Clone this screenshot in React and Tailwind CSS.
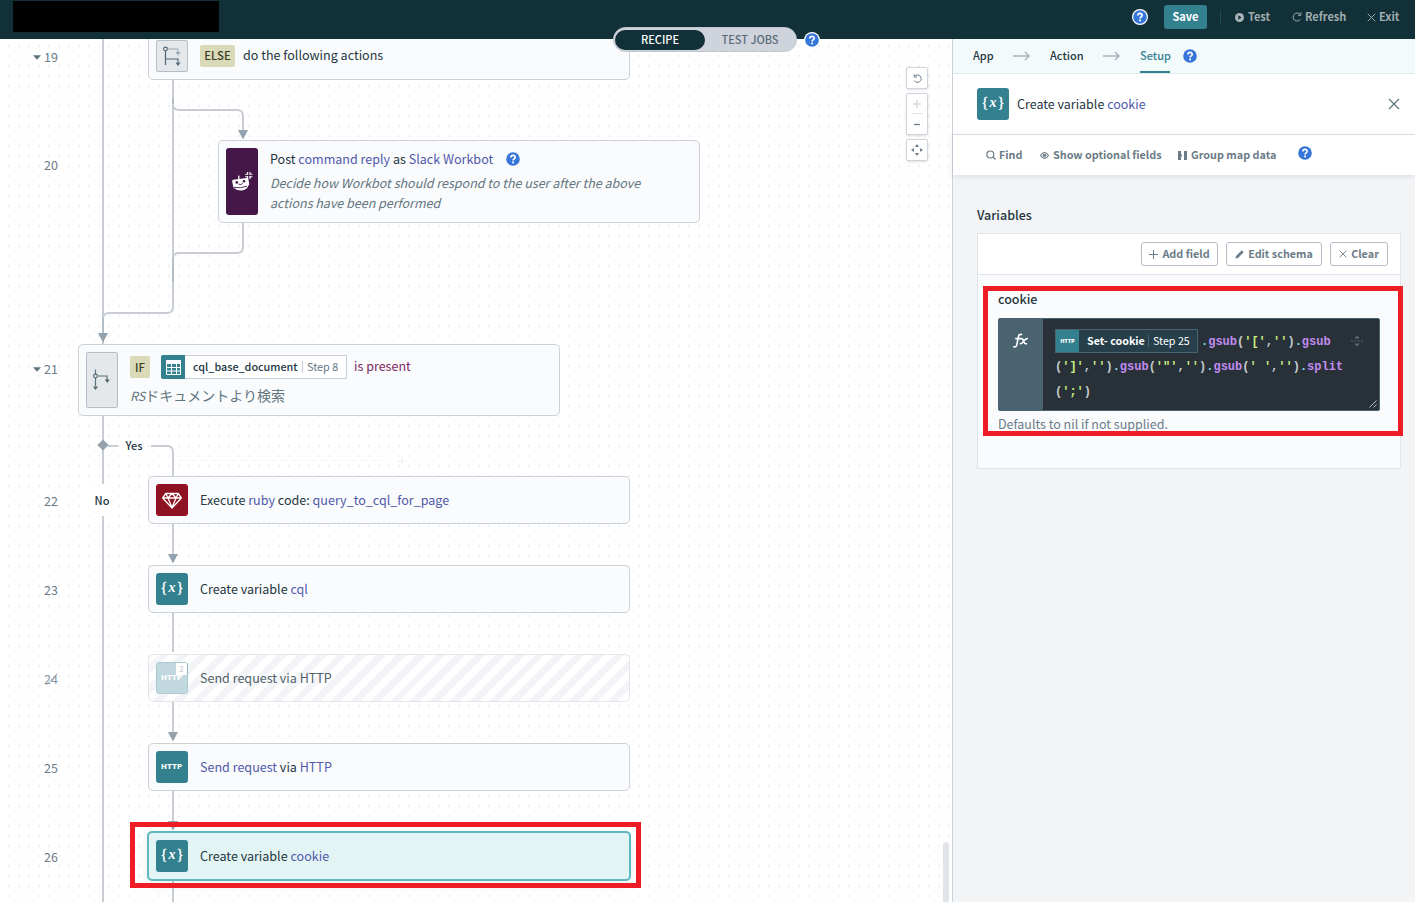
import React from "react";

const SANS = "font-['Noto_Sans_CJK_JP',sans-serif]";

function Help({ ring = false }) {
  return (
    <svg className="block h-4 w-4 shrink-0" viewBox="0 0 16 16">
      {ring ? <circle cx="8" cy="8" r="8" fill="#fff" /> : null}
      <circle cx="8" cy="8" r="6.8" fill="#3676d8" />
      <path d="M5.9 6.5c0-2.9 4.3-2.8 4.3-.2 0 1.6-2.1 1.6-2.1 3.1" fill="none" stroke="#fff" strokeWidth="1.7" />
      <rect x="7.2" y="10.5" width="1.8" height="1.8" fill="#fff" />
    </svg>
  );
}

function Cross({ className = "h-[9px] w-[9px]", sw = 1.1 }) {
  return (
    <svg className={className + " block shrink-0"} viewBox="0 0 10 10" fill="none" stroke="currentColor" strokeWidth={sw}>
      <path d="M.8.8l8.4 8.4M9.2.8L.8 9.2" />
    </svg>
  );
}

function VarIcon() {
  return (
    <div className="flex h-8 w-8 shrink-0 items-center justify-center gap-px rounded-[3px] bg-[#33808f] pb-[3px] font-['Liberation_Serif',serif] leading-none text-white">
      <span className="text-[15px] [-webkit-text-stroke:0.3px_#fff]">{"{"}</span>
      <span className="text-[14px] font-bold italic">x</span>
      <span className="text-[15px] [-webkit-text-stroke:0.3px_#fff]">{"}"}</span>
    </div>
  );
}

function HttpIcon({ faded = false }) {
  return (
    <div className={"relative flex h-8 w-8 shrink-0 items-center justify-center rounded-[3px] text-white " + (faded ? "border border-[#a9cbd1] bg-[#c1d9de]" : "bg-[#33808f]")}>
      <span className="scale-x-120 font-['Inter',sans-serif] text-[6px] font-black leading-none tracking-[0.2px]">HTTP</span>
      {faded ? (
        <span className="absolute -right-px top-0 flex h-3 w-3 items-center justify-center border-r border-[#8ebac2] bg-white text-[8px] leading-none text-[#c3c8d0]">2</span>
      ) : null}
    </div>
  );
}

function RubyIcon() {
  return (
    <div className="flex h-8 w-8 shrink-0 items-center justify-center rounded-[3px] bg-[#8e1220]">
      <svg className="h-8 w-8" viewBox="0 0 32 32" fill="none" stroke="#fff" strokeWidth="1.3" strokeLinejoin="round">
        <path d="M9.8 9.5h12.4l3.2 4.5-9.4 10L6.600 14zM6.600 14h18.800M12 14l4 9.500 4-9.500M9.800 9.500L12 14l4-4.500 4 4.500 2.200-4.500" />
      </svg>
    </div>
  );
}

function BotIcon() {
  return (
    <div className="flex h-[67px] w-8 shrink-0 items-center justify-center rounded-[3px] bg-[#451749]">
      <svg className="h-8 w-8" viewBox="0 0 32 32">
        <path d="M6.200 15.400q-.2-1.300 1-1.600l13.600-1.900q1.300-.2 1.600 1l.8 5.200q.1 1.200-1 1.600-1.300 4.300-6.600 4.800-4.500.2-6.800-2.100-1.200-.1-1.500-1.300z" fill="#fff" />
        <path d="M13 13l-.4-3.300" stroke="#fff" strokeWidth="1.300" />
        <circle cx="10.800" cy="16.400" r="1.300" fill="#451749" />
        <circle cx="18" cy="15.300" r="1.300" fill="#451749" />
        <path d="M12.500 18q2.500 1.400 4.200-.6" fill="none" stroke="#451749" strokeWidth=".9" />
        <path d="M8 21.300q6.500 1.600 13-1.200" fill="none" stroke="#451749" strokeWidth=".9" />
        <path d="M21.600 6v2.800M21.600 10v3M24 6v2.800M24 10v3M19.200 8.200H22M23.200 8.200H26.400M19.200 10.700H22M23.200 10.700H26.400" stroke="#fff" strokeWidth="1.100" />
      </svg>
    </div>
  );
}

function BranchIcon({ els = false }) {
  return (
    <div className={(els ? "h-8" : "h-14") + " flex w-8 shrink-0 items-center justify-center rounded-[2px] border border-[#b4bec8] bg-[#e4e8eb]"}>
      {els ? (
        <svg className="h-8 w-8 shrink-0" viewBox="0 0 32 32" fill="none">
          <path d="M12 9h10v3" stroke="#9aa8b3" strokeWidth="1" />
          <path d="M19.500 12h5L22 15.500z" fill="#9aa8b3" />
          <path d="M9.500 11v14M9.500 19H22v3" stroke="#4f6573" strokeWidth="1.200" />
          <path d="M19.500 22.500h5L22 26z" fill="#4f6573" />
          <circle cx="9.500" cy="9" r="1.900" stroke="#4f6573" strokeWidth="1.100" />
        </svg>
      ) : (
        <svg className="h-8 w-8 shrink-0" viewBox="0 0 32 32" fill="none">
          <path d="M9.500 5.500v5M9.500 14v8M11.500 12H21v4" stroke="#5c707a" strokeWidth="1.200" />
          <path d="M7 22.500h5L9.500 26zM18.800 15.500h5L21.300 19z" fill="#4f6560" />
          <circle cx="9.500" cy="12" r="1.900" stroke="#4f6573" strokeWidth="1.100" />
        </svg>
      )}
    </div>
  );
}

const Ln = ({ children }) => <span className="text-[#5059ab]">{children}</span>;

function Card({ place, children, disabled = false, selected = false }) {
  const skin = selected
    ? "border-2 border-[#5cb7bf] bg-[#e3f4f5] px-[7px] shadow-[0_4px_12px_rgba(60,80,100,0.1)]"
    : disabled
      ? "border border-[#e3e6ea] bg-[repeating-linear-gradient(135deg,#fff_0px,#fff_7px,#f3f4f7_7px,#f3f4f7_14px)] px-[7px]"
      : "border border-[#cbd1d8] bg-[#fafbfd] px-[7px]";
  return (
    <div className={"absolute flex items-center gap-3 rounded-[5px] text-[12.55px] leading-5 text-[#24363f] whitespace-nowrap " + skin + " " + place}>
      {children}
    </div>
  );
}

function StepNo({ place, n, caret = false, slash = false }) {
  return (
    <div className={"absolute left-0 flex h-5 w-[58px] items-center justify-end gap-[3px] text-[12.5px] leading-5 text-[#6b7c88] " + place + (slash ? " opacity-80" : "")}>
      {caret ? (
        <svg className="h-[5px] w-2" viewBox="0 0 8 5"><path d="M0 .3h8L4 4.700z" fill="#5e7481" /></svg>
      ) : null}
      <span>{n}</span>
      {slash ? (
        <svg className="absolute right-0 top-[4px] h-3 w-[13px]" viewBox="0 0 13 12"><path d="M1.500 12L12.500 .5" stroke="#7b8c98" /></svg>
      ) : null}
    </div>
  );
}

function Wires() {
  return (
    <svg className="absolute inset-0 h-[863px] w-[952px]" viewBox="0 39 952 863" fill="none">
      <g stroke="#c7cdd3" strokeWidth="2">
        <path d="M103 39V344M103 416V484M103 515V902" />
        <path d="M173 80V307q0 6-6 6H109q-6 0-6 6v14" />
        <path d="M173 100v4q0 6 6 6h58q6 0 6 6v15" />
        <path d="M243 223v24q0 6-6 6h-58q-6 0-6 6" />
        <path d="M108 446h10M151 446h16q6 0 6 6v24" />
        <path d="M173 524v32M173 613v39M173 702v32M173 791v32M173 881v21" />
      </g>
      <path d="M173 258v24M103 318v16M173 98v6" stroke="#b3bdc6" strokeWidth="2" />
      <g fill="#94a2ae">
        <path d="M238 130h10l-5 9.500zM98 333h10l-5 9.500zM168 554h10l-5 9.500zM168 732h10l-5 9.500zM168 821h10l-5 9.500z" />
        <path d="M103 439.500l5.700 5.500-5.700 5.500-5.700-5.500z" />
      </g>
      <path d="M178 460.500h207" stroke="#f6f7f8" />
      <path d="M397.500 461h9M402 456.500v9" stroke="#eef0f1" />
    </svg>
  );
}

function Canvas() {
  return (
    <main className="relative h-[863px] w-[952px] shrink-0 overflow-hidden bg-white bg-[conic-gradient(from_270deg_at_2px_2px,#f0f1f2_90deg,transparent_0)] bg-[length:10px_10px] bg-[position:8px_6px]">
      <Wires />
      <div className="absolute left-[118px] top-[397px] flex h-5 w-8 items-center justify-center pb-px text-[11px] font-medium text-[#24363f]">Yes</div>
      <div className="absolute left-[87px] top-[447px] flex h-[30px] w-[30px] items-center justify-center bg-white pb-px text-[11px] font-medium text-[#24363f]">No</div>

      <StepNo place="top-[8px]" n="19" caret />
      <StepNo place="top-[116px]" n="20" />
      <StepNo place="top-[320px]" n="21" caret />
      <StepNo place="top-[452px]" n="22" />
      <StepNo place="top-[541px]" n="23" />
      <StepNo place="top-[630px]" n="24" slash />
      <StepNo place="top-[719px]" n="25" />
      <StepNo place="top-[808px]" n="26" />

      <Card place="left-[148px] top-[-7px] h-12 w-[482px]">
        <BranchIcon els />
        <div className="flex items-center gap-2 pb-[2px]">
          <span className="mt-px flex h-[22px] w-[35px] items-center justify-center rounded-[2px] bg-[#dbdab8] pb-0.5 text-[11.3px] font-medium text-[#3a3c28]">ELSE</span>
          <span>do the following actions</span>
        </div>
      </Card>

      <Card place="left-[218px] top-[101px] h-[83px] w-[482px]">
        <BotIcon />
        <div className="flex flex-col self-start pt-2">
          <div className="mb-1 flex items-center gap-3">
            <span>Post <Ln>command reply</Ln> as <Ln>Slack Workbot</Ln></span>
            <Help />
          </div>
          <div className="w-[400px] text-[12.5px] italic text-[#63757f]">
            Decide how Workbot should respond to the user after the above<br />actions have been performed
          </div>
        </div>
      </Card>

      <Card place="left-[78px] top-[305px] h-[72px] w-[482px]">
        <BranchIcon />
        <div className="flex flex-col gap-[6px] pt-px">
          <div className="flex items-center">
            <span className="mr-[11px] flex h-[22px] w-5 items-center justify-center rounded-[2px] bg-[#dbdab8] text-[11.3px] font-medium text-[#3a3c28]">IF</span>
            <div className="mr-[7px] flex h-6 w-[186px] items-center">
              <div className="flex h-6 w-6 shrink-0 items-center justify-center rounded-l-[2px] bg-[#33808f]">
                <svg className="h-[15px] w-[15px]" viewBox="0 0 15 15" fill="none" stroke="#fff">
                  <path d="M.5 1h14M.5 3h14" strokeWidth="2" />
                  <path d="M.5.5h14v14H.5zM5.500 3v11.500M10.500 3v11.500M.5 7.500h14M.5 11h14" />
                </svg>
              </div>
              <div className="flex h-6 flex-1 items-center border border-l-0 border-[#c9cfd9] bg-white pl-2 text-[11px]">
                <span className="w-[105px] pb-0.5 text-[10.8px] font-medium">cql_base_document</span>
                <span className="ml-1 h-3 w-px bg-[#c9cfd9]" />
                <span className="ml-1 pb-0.5 text-[10.8px] text-[#63757f]">Step 8</span>
              </div>
            </div>
            <span className="pb-0.5 text-[#7f2a62]">is present</span>
          </div>
          <div className="italic text-[#63757f]">RS<span className="not-italic text-[14px]">ドキュメントより検索</span></div>
        </div>
      </Card>

      <Card place="left-[148px] top-[437px] h-12 w-[482px]">
        <RubyIcon />
        <span>Execute <Ln>ruby</Ln> code: <Ln>query_to_cql_for_page</Ln></span>
      </Card>
      <Card place="left-[148px] top-[526px] h-12 w-[482px]">
        <VarIcon />
        <span>Create variable <Ln>cql</Ln></span>
      </Card>
      <Card place="left-[148px] top-[615px] h-12 w-[482px]" disabled>
        <HttpIcon faded />
        <span className="text-[#4e5f68]">Send request via HTTP</span>
      </Card>
      <Card place="left-[148px] top-[704px] h-12 w-[482px]">
        <HttpIcon />
        <span><Ln>Send request</Ln> via <Ln>HTTP</Ln></span>
      </Card>
      <Card place="left-[147px] top-[792px] h-[50px] w-[484px]" selected>
        <VarIcon />
        <span>Create variable <Ln>cookie</Ln></span>
      </Card>
      <div className="absolute left-[130px] top-[783px] h-[66px] w-[511px] border-[5px] border-[#ee1c25]" />

      <div className="absolute left-[906px] top-[28px] flex w-[22px] flex-col gap-1 text-[#6b7c88]">
        <div className="flex h-[22px] items-center justify-center rounded-[2px] border border-[#cfd4dc] bg-white shadow-sm">
          <svg className="h-[9px] w-[9px]" viewBox="0 0 9 9" fill="none" stroke="currentColor"><path d="M1.500 2.500a3.700 3.700 0 1 1-.2 4M1.200 .2v2.800h2.800" /></svg>
        </div>
        <div className="flex h-[42px] flex-col items-center rounded-[2px] border border-[#cfd4dc] bg-white shadow-sm">
          <svg className="h-10 w-5" viewBox="0 0 20 40" fill="none">
            <path d="M10 6v8M6 10h8" stroke="#d6dade" strokeWidth="1.400" />
            <path d="M4.500 19.500h11" stroke="#dfe2e6" />
            <path d="M7 30.500h6" stroke="#6b7c88" strokeWidth="1.300" />
          </svg>
        </div>
        <div className="flex h-[22px] items-center justify-center rounded-[2px] border border-[#cfd4dc] bg-white shadow-sm">
          <svg className="h-3 w-3" viewBox="0 0 12 12" fill="currentColor"><path d="M4 2.900L6 0l2 2.900zM4 9.100L6 12l2-2.900zM2.900 4L0 6l2.900 2zM9.100 4L12 6 9.100 8z" /></svg>
        </div>
      </div>
      <div className="absolute left-[943px] top-[803px] h-[70px] w-1.5 rounded-full bg-[#e1e5e9]" />
    </main>
  );
}

function Header() {
  return (
    <header className="relative z-10 flex h-[39px] shrink-0 bg-[#113037] text-[11px] font-bold text-[#a0acb0]">
      <div className="ml-[13px] mt-px h-[31px] w-[206px] bg-black" />
      <div className="ml-auto flex h-[34px] items-center">
        <Help ring />
        <button className="ml-4 flex h-6 w-[43px] items-center justify-center rounded-[3px] bg-[#33808f] pb-px text-white">Save</button>
        <span className="ml-[13px] h-[14px] w-px bg-[#1b4b5b]" />
        <div className="ml-[14px] flex w-[57px] items-center gap-[4px]">
          <svg className="h-[9px] w-[9px]" viewBox="0 0 10 10"><circle cx="5" cy="5" r="5" fill="#a9b5b8" /><path d="M3.700 2.600L7.300 5 3.700 7.400z" fill="#113037" /></svg>
          <span className="pb-0.5">Test</span>
        </div>
        <div className="flex w-[75px] items-center gap-[3px]">
          <svg className="h-[10px] w-[10px]" viewBox="0 0 10 10" fill="none" stroke="currentColor"><path d="M8.500 7.200A4 4 0 1 1 8.300 2.600M8.900 .3v3H6" /></svg>
          <span className="pb-0.5">Refresh</span>
        </div>
        <div className="flex w-12 items-center gap-[3px]">
          <Cross />
          <span className="pb-0.5">Exit</span>
        </div>
      </div>
      <div className="absolute left-[613px] top-[27px] flex items-center gap-[7px]">
        <div className="flex h-[25px] w-[184px] items-center rounded-full border border-[#c0c5cf] bg-[#cfd4dc] p-px font-medium">
          <span className="flex h-5 w-[90px] items-center justify-center rounded-full bg-[#113037] pb-px text-white">RECIPE</span>
          <span className="flex h-5 w-[90px] items-center justify-center pb-px text-[#5a6c7b]">TEST JOBS</span>
        </div>
        <Help ring />
      </div>
    </header>
  );
}

function Arrow() {
  return (
    <svg className="h-[10px] w-[17px]" viewBox="0 0 17 10" fill="none" stroke="#a7b3bc" strokeWidth="1.500"><path d="M0 5h16M12 1l4 4-4 4" /></svg>
  );
}

function Btn({ w, children }) {
  return (
    <button className={"flex h-6 items-center justify-center gap-[4px] rounded-[3px] border border-[#b4bec8] bg-white " + w}>
      {children}
    </button>
  );
}

const P = ({ children }) => <span className="text-[#c5cbd0]">{children}</span>;
const D = () => <span className="text-[#8adcf0]">.</span>;
const F = ({ children }) => <span className="text-[#c18cf0]">{children}</span>;
const S = ({ children }) => <span className="text-[#c9ee80]">{children}</span>;

function Panel() {
  return (
    <aside className="flex flex-1 flex-col border-l border-[#cbd1d9] bg-[#f3f4f6]">
      <nav className="flex h-[35px] items-center border-b border-[#dfebed] bg-[#f3fafb] pl-5 text-[11px] font-medium text-[#24363f]">
        <span className="w-[40px] pb-0.5">App</span>
        <Arrow />
        <span className="ml-5 w-[53px] pb-0.5">Action</span>
        <Arrow />
        <span className="ml-5 flex h-[34px] w-[30px] items-center border-b-2 border-[#33808f] text-[#33808f]">Setup</span>
        <span className="ml-3"><Help /></span>
      </nav>
      <div className="flex h-[61px] items-center gap-2 border-b border-[#e1e4e8] bg-white pl-6 pr-[15px] text-[12.5px] text-[#24363f]">
        <VarIcon />
        <span>Create variable <Ln>cookie</Ln></span>
        <span className="ml-auto text-[#5e7481]"><Cross className="h-3 w-3" sw={1} /></span>
      </div>
      <div className="z-[1] flex h-10 shrink-0 items-center bg-white pl-[33px] text-[10.8px] font-bold text-[#6b7c88] shadow-[0_1px_6px_rgba(60,80,100,0.14)]">
        <div className="flex w-[54px] items-center gap-[3px]">
          <svg className="h-[10px] w-[10px]" viewBox="0 0 10 10" fill="none" stroke="currentColor" strokeWidth="1.200"><circle cx="4.300" cy="4.500" r="3.500" /><path d="M7 7l2.500 2.500" /></svg>
          <span className="pb-0.5">Find</span>
        </div>
        <div className="flex w-[138px] items-center gap-1">
          <svg className="h-[9px] w-[9px]" viewBox="0 0 9 9" fill="none" stroke="currentColor"><path d="M.5 4.500Q4.500-1.500 8.500 4.500 4.500 10.500 .5 4.500z" strokeWidth="1.200" /><circle cx="4.500" cy="4.500" r="1.300" fill="currentColor" /></svg>
          <span className="pb-0.5">Show optional fields</span>
        </div>
        <div className="flex w-[119px] items-center gap-1">
          <svg className="h-[9px] w-[9px]" viewBox="0 0 9 9" fill="currentColor"><path d="M0 0h3v9H0zM6 0h3v9H6z" /><path d="M3 3.500h1v2H3z" /></svg>
          <span className="pb-0.5">Group map data</span>
        </div>
        <span className="-mt-1"><Help /></span>
      </div>

      <section className="flex flex-col pl-6 pr-[14px] pt-[30px]">
        <h2 className="h-5 text-[12.5px] font-medium leading-5 text-[#24363f]">Variables</h2>
        <div className="relative mt-2 h-[236px] border border-[#e1e4e8] bg-[#fafbfd]">
          <div className="flex h-[41px] items-center justify-end gap-2 border-b border-[#e1e4e8] bg-white pr-3 text-[10.8px] font-bold text-[#6b7c88]">
            <Btn w="w-[77px]">
              <svg className="h-[9px] w-[9px]" viewBox="0 0 9 9" fill="none" stroke="currentColor"><path d="M4.500 0v9M0 4.500h9" /></svg>
              <span className="pb-0.5">Add field</span>
            </Btn>
            <Btn w="w-24">
              <svg className="h-[9px] w-[9px]" viewBox="0 0 9 9" fill="currentColor"><path d="M.4 8.600l.7-2.600L6.800.3l1.900 1.900L3 7.900z" /></svg>
              <span className="pb-0.5">Edit schema</span>
            </Btn>
            <Btn w="w-[58px]"><Cross className="h-2 w-2" /><span className="pb-0.5">Clear</span></Btn>
          </div>
          <div className="flex flex-col px-5 pt-[14px]">
            <label className="h-5 text-[12.5px] font-medium leading-5 text-[#24363f]">cookie</label>
            <div className="relative mt-[9px] flex h-[93px] w-[382px] rounded-[2px] border border-[#4a6370] bg-[#293138]">
              <div className="w-11 shrink-0 bg-[#4a6370] pl-[14px] pt-[13px]">
                <svg className="h-[18px] w-4" viewBox="0 0 16 18" fill="none" stroke="#fff" strokeWidth="1.600" strokeLinecap="round">
                  <path d="M.8 14.800c2 .8 2.700-.6 3.200-3L5.300 5.200C5.700 3 6.500 1.900 8.600 2.500M2.800 6.600h4.900" />
                  <path d="M8 6.700c2.200-.6 2.200 1.200 2.800 3s1 2.500 2.700 2M14.300 6.600c-2 0-2.800 1.500-3.700 2.700s-1.600 2.600-3.400 2.500" />
                </svg>
              </div>
              <div className="flex-1 pl-3 pt-[11px] font-['Liberation_Mono',monospace] text-[12px] font-bold leading-[25px] whitespace-pre">
                <div className="flex h-[25px] items-center">
                  <span className={"-mt-[3px] mr-[3px] flex h-6 w-[143px] shrink-0 items-center border border-[#4a6370] bg-[#273f4b] text-[10.7px] leading-[22px] text-white " + SANS}>
                    <span className="flex h-[22px] w-[23px] items-center justify-center bg-[#33808f] font-['Inter',sans-serif] text-[5px] font-black">HTTP</span>
                    <span className="ml-2 w-[57px]">Set- cookie</span>
                    <span className="ml-1 h-3 w-px bg-[#4a6370]" />
                    <span className="ml-1 font-normal">Step 25</span>
                  </span>
                  <span><D /><F>gsub</F><P>(</P><S>'['</S><P>,</P><S>''</S><P>)</P><D /><F>gsub</F></span>
                </div>
                <div><P>(</P><S>']'</S><P>,</P><S>''</S><P>)</P><D /><F>gsub</F><P>(</P><S>'"'</S><P>,</P><S>''</S><P>)</P><D /><F>gsub</F><P>(</P><S>' '</S><P>,</P><S>''</S><P>)</P><D /><F>split</F></div>
                <div><P>(</P><S>';'</S><P>)</P></div>
              </div>
              <svg className="absolute right-4 top-4 h-3 w-3" viewBox="0 0 12 12" fill="#566873"><path d="M3.200 3.500L6 .3l2.800 3.200zM3.200 8.500L6 11.700l2.800-3.200z" /><path d="M0 5.500h2v1H0zM3.300 5.500h2v1h-2zM6.600 5.500h2v1h-2zM10 5.500h2v1h-2z" /></svg>
              <svg className="absolute bottom-0.5 right-0.5 h-2 w-2" viewBox="0 0 8 8" stroke="#b9bec2"><path d="M.5 7.500l7-7M4.500 7.500l3-3" /></svg>
            </div>
            <p className="mt-[3px] h-5 text-[12.5px] leading-5 text-[#6b7c88]">Defaults to nil if not supplied.</p>
          </div>
          <div className="absolute left-[5px] top-[52px] h-[150px] w-[420px] border-[5px] border-[#ee1c25]" />
        </div>
      </section>
    </aside>
  );
}

export default function App() {
  return (
    <div className={"flex h-[902px] w-[1415px] flex-col overflow-hidden whitespace-nowrap bg-white " + SANS}>
      <Header />
      <div className="flex flex-1">
        <Canvas />
        <Panel />
      </div>
    </div>
  );
}
